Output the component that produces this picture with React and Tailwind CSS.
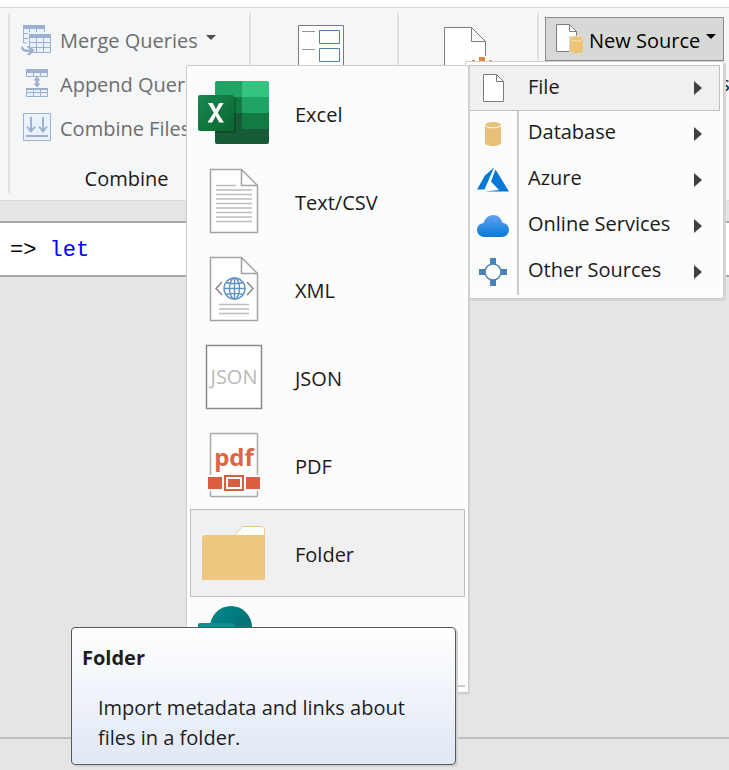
function MergeIcon() {
  return (
    <svg width="32" height="32" viewBox="0 0 32 32" fill="none" aria-hidden="true">
      <path d="M3.500 2.500h21v7h-14v9h-7z" fill="#eaf2fd" />
      <path d="M3.500 5v14h4M9.500 5v3M16.500 5v3M24.500 5v3M4 9.500h4M4 14.500h4" stroke="#9db0cf" />
      <path d="M3 1h22v4H3z" fill="#9db0cf" />
      <path d="M9.500 11h21v17.500h-21z" fill="#eaf2fd" stroke="#9db0cf" />
      <path d="M9 10h22v4H9z" fill="#9db0cf" />
      <path d="M16.500 14v14M23.500 14v14M10 18.500h20M10 23.500h20" stroke="#9db0cf" />
      <path d="M0 21h8l6 5-3 5H0z" fill="#f4f6f8" />
      <path d="M1 22.500c2.500-.5 2 2.500 5.500 3h3l-3-3.500h3.500l4.500 4.500-4.500 4.500H6.500l3-3C4 28.500 1 27 1 22.500z" fill="#9db0cf" />
    </svg>
  );
}

function AppendIcon() {
  return (
    <svg width="32" height="32" viewBox="0 0 32 32" fill="none" aria-hidden="true">
      <path d="M6.500 2.500h21v6h-21zM6.500 20.500h21v8h-21z" fill="#eaf2fd" stroke="#9db0cf" />
      <path d="M6 1h22v4H6zM6 20h22v2H6z" fill="#9db0cf" />
      <path d="M13.500 5v4M20.500 5v4M13.500 20v9M20.500 20v9M6 24.500h22" stroke="#9db0cf" />
      <path d="M17 8.500l3.500 4h-2v2h-3v-2h-2zM17 19.500l3.500-4h-2v-1h-3v1h-2z" fill="#9db0cf" />
    </svg>
  );
}

function CombineIcon() {
  return (
    <svg width="32" height="32" viewBox="0 0 32 32" fill="none" aria-hidden="true">
      <path d="M3.500 1.500h27v27h-27z" fill="#eaf2fd" stroke="#9db0cf" />
      <path d="M11 5v15M23 5v15M7 14.500l4 5 4-5M19 14.500l4 5 4-5" stroke="#9db0cf" strokeWidth="2" />
      <path d="M6 24h22" stroke="#9db0cf" strokeWidth="2" />
    </svg>
  );
}

function ParametersIcon() {
  return (
    <svg width="46" height="56" viewBox="0 0 46 56" fill="none" aria-hidden="true">
      <path d="M.5.5h45v54H.5z" fill="#fff" stroke="#7b7b7b" />
      <path d="M4 6.500h13M4 24.500h13M4 42.500h13" stroke="#979797" />
      <path d="M21.500 5.500h20v13h-20zM21.500 23.500h20v13h-20zM21.500 41.500h20v10h-20z" fill="#fff" stroke="#4b81b9" />
    </svg>
  );
}

function SettingsPageIcon() {
  return (
    <svg width="48" height="56" viewBox="0 0 48 56" fill="none" aria-hidden="true">
      <path d="M.5.5h27l14 14v40H.5z" fill="#fff" stroke="#7b7b7b" />
      <path d="M27.500.5v14h14" stroke="#7b7b7b" />
      <path d="M34 29h8v3h6v8H26v-8h8z" fill="#fff" />
      <path d="M35 30h6v4h-6zM28 33h3v2h-3zM45 33h3v2h-3z" fill="#e3853d" />
    </svg>
  );
}

function NewSourceIcon() {
  return (
    <svg width="28" height="30" viewBox="0 0 28 30" fill="none" aria-hidden="true">
      <path d="M.5.500h13l7 7v20H.5z" fill="#fff" stroke="#7b7b7b" />
      <path d="M13.500.5v7h7" stroke="#7b7b7b" />
      <path d="M13 12h15v18H13z" fill="#d7d9d7" />
      <path d="M14 14.500v12.500c0 3 13 3 13 0V14.500z" fill="#ecc478" />
      <ellipse cx="20.500" cy="14.500" rx="6.500" ry="2.500" fill="#ecc478" stroke="#f6e4c0" />
    </svg>
  );
}

function FileIcon() {
  return (
    <svg width="32" height="32" viewBox="0 0 32 32" fill="none" aria-hidden="true">
      <path d="M6.500 2.500h13l7 7v20h-20z" fill="#fff" stroke="#7b7b7b" />
      <path d="M19.500 2.500v7h7" stroke="#7b7b7b" />
    </svg>
  );
}

function DatabaseIcon() {
  return (
    <svg width="32" height="32" viewBox="0 0 32 32" aria-hidden="true">
      <path d="M8 7v18c0 4 16 4 16 0V7z" fill="#e8c07a" />
      <ellipse cx="16" cy="7" rx="8" ry="3" fill="#e8c07a" />
      <path d="M8 7c1 3.700 15 3.700 16 0" fill="none" stroke="#fff" />
    </svg>
  );
}

function AzureIcon() {
  return (
    <svg width="32" height="32" viewBox="0 0 32 32" fill="#0078d7" aria-hidden="true">
      <path d="M17 3.500L8 11.500 0 25.500h7.500z" />
      <path d="M18.500 5.500L14 17.500l8 8.500-14 1.500h24z" />
    </svg>
  );
}

function CloudIcon() {
  return (
    <svg width="32" height="32" viewBox="0 0 32 32" aria-hidden="true">
      <defs>
        <linearGradient id="cloud" x1="0" y1="0" x2="0" y2="1">
          <stop offset="0" stopColor="#62a3f2" />
          <stop offset="1" stopColor="#0878d6" />
        </linearGradient>
      </defs>
      <path d="M7.500 27A7.300 7.300 0 0 1 0 20c0-3.600 2.800-6.600 6.700-6.900C7.800 8.300 11.800 5 16.300 5c4.700 0 8.100 3.200 9.100 7.800 3.900.4 6.600 3.300 6.600 7 0 4.100-3.300 7.200-7.500 7.200z" fill="url(#cloud)" />
    </svg>
  );
}

function OtherIcon() {
  return (
    <svg width="32" height="32" viewBox="0 0 32 32" aria-hidden="true">
      <path d="M13 2h6v7h-6zM13 23h6v7h-6zM2 13h7v6H2zM23 13h7v6h-7z" fill="#4b81b9" />
      <circle cx="16" cy="16" r="8" fill="#fff" stroke="#4b81b9" strokeWidth="1.500" />
    </svg>
  );
}

function ExcelIcon() {
  return (
    <svg width="72" height="72" viewBox="0 0 72 72" aria-hidden="true">
      <defs>
        <linearGradient id="excelTile" x1="0" y1="0" x2="1" y2="1">
          <stop offset="0" stopColor="#18884f" />
          <stop offset="1" stopColor="#0b6631" />
        </linearGradient>
        <clipPath id="excelBook">
          <rect x="17" y="4" width="54" height="63" rx="2" />
        </clipPath>
      </defs>
      <g clipPath="url(#excelBook)">
        <path d="M17 4h27v16H17z" fill="#21a366" />
        <path d="M44 4h27v16H44z" fill="#33c481" />
        <path d="M17 20h27v16H17z" fill="#107c41" />
        <path d="M44 20h27v16H44z" fill="#21a366" />
        <path d="M17 36h54v31H17z" fill="#185c37" />
        <path d="M44 36h27v16H44z" fill="#107c41" />
        <rect x="6" y="20" width="32" height="36" rx="2" fill="#000" opacity=".2" />
      </g>
      <rect x="0" y="18" width="36" height="36" rx="2" fill="url(#excelTile)" />
      <path d="M9.500 45.500l6.300-9.700L10 26h4.700l3.200 6.200L21.200 26h4.400l-5.900 9.700 6.200 9.800h-4.700l-3.500-6.500-3.600 6.500z" fill="#fff" />
    </svg>
  );
}

function PageShape() {
  return (
    <>
      <path d="M12.500 4.500h31l16 16v47h-47z" fill="#fff" stroke="#a3a3a3" strokeWidth="1.500" />
      <path d="M43.500 4.500v16h16" fill="none" stroke="#a3a3a3" strokeWidth="1.500" />
    </>
  );
}

function TextIcon() {
  return (
    <svg width="72" height="72" viewBox="0 0 72 72" aria-hidden="true">
      <PageShape />
      <path d="M18 20.500h20M18 25h36M18 29.500h36M18 34h36M18 38.500h36M18 43h36M18 47.500h36M18 52h36M18 56.500h36" stroke="#bcbcbc" strokeWidth="1.300" />
    </svg>
  );
}

function XmlIcon() {
  return (
    <svg width="72" height="72" viewBox="0 0 72 72" fill="none" aria-hidden="true">
      <PageShape />
      <g stroke="#5e93c8" strokeWidth="1.400">
        <circle cx="36.500" cy="35.500" r="10.500" />
        <ellipse cx="36.500" cy="35.500" rx="5" ry="10.500" />
        <path d="M36.500 25v21M26 35.500h21M28.500 29.500c4 1.500 12 1.500 16 0M28.500 41.500c4-1.500 12-1.500 16 0" />
      </g>
      <path d="M24 29l-6 6.500 6 6.500M49 29l6 6.500-6 6.500" stroke="#8a8a8a" strokeWidth="1.500" />
      <path d="M21 51.500h30M21 56h30M21 60.500h30" stroke="#bcbcbc" strokeWidth="1.300" />
    </svg>
  );
}

function JsonIcon() {
  return (
    <svg width="72" height="72" viewBox="0 0 72 72" aria-hidden="true">
      <path d="M8.500 4.500h55v63h-55z" fill="#fff" stroke="#8a8a8a" strokeWidth="1.500" />
      <text x="36" y="43" textAnchor="middle" fontSize="20" fill="#b9b9b9" className="font-['Open_Sans','Noto_Sans',sans-serif]">
        JSON
      </text>
    </svg>
  );
}

function PdfIcon() {
  return (
    <svg width="72" height="72" viewBox="0 0 72 72" aria-hidden="true">
      <rect x="12.500" y="4.500" width="47" height="63" rx="1" fill="#fff" stroke="#a8a8a8" strokeWidth="1.500" />
      <text x="36" y="37" textAnchor="middle" fontSize="24" fontWeight="700" fill="#dc6547" className="font-['Open_Sans','Noto_Sans',sans-serif]">
        pdf
      </text>
      <path d="M9 46h54v16H9z" fill="#fff" />
      <path d="M10 48h14v12H10zM48 48h14v12H48z" fill="#d95f40" />
      <path d="M27 47h18v14H27z" fill="#fff" stroke="#d95f40" strokeWidth="2" />
      <path d="M30 50h12v8H30z" fill="#d95f40" />
    </svg>
  );
}

function FolderIcon() {
  return (
    <svg width="72" height="72" viewBox="0 0 72 72" aria-hidden="true">
      <path d="M35.500 19l9-9.500h19q3 0 3 3V20z" fill="#fff" stroke="#edc77f" />
      <path d="M4 63V22q0-4 4-4h59v45z" fill="#edc77f" />
    </svg>
  );
}

function SharePointIcon() {
  return (
    <svg width="72" height="72" viewBox="0 0 72 72" aria-hidden="true">
      <defs>
        <linearGradient id="siteDisc" x1="0" y1="0" x2="1" y2="1">
          <stop offset="0" stopColor="#03888b" />
          <stop offset="1" stopColor="#03686b" />
        </linearGradient>
      </defs>
      <circle cx="33" cy="22" r="21" fill="url(#siteDisc)" />
      <circle cx="54" cy="42" r="17" fill="#1a9ba1" />
      <circle cx="36" cy="54" r="14" fill="#37c6d0" />
      <rect x="0" y="18" width="36" height="36" rx="2" fill="#058f92" />
    </svg>
  );
}

function DownArrow({ className }) {
  return (
    <svg width="10" height="5" viewBox="0 0 10 5" className={className} fill="currentColor" aria-hidden="true">
      <path d="M0 0h10L5 5z" />
    </svg>
  );
}

const queryCommands = [
  { label: "Merge Queries", Icon: MergeIcon, arrow: true },
  { label: "Append Queries", Icon: AppendIcon, arrow: true },
  { label: "Combine Files", Icon: CombineIcon, arrow: false },
];

const sources = [
  { label: "File", Icon: FileIcon },
  { label: "Database", Icon: DatabaseIcon },
  { label: "Azure", Icon: AzureIcon },
  { label: "Online Services", Icon: CloudIcon },
  { label: "Other Sources", Icon: OtherIcon },
];

const fileTypes = [
  { label: "Excel", Icon: ExcelIcon },
  { label: "Text/CSV", Icon: TextIcon },
  { label: "XML", Icon: XmlIcon },
  { label: "JSON", Icon: JsonIcon },
  { label: "PDF", Icon: PdfIcon },
  { label: "Folder", Icon: FolderIcon },
];

function Divider() {
  return <div className="w-0.5 shrink-0 self-stretch bg-[#e0e1e3]" />;
}

function FolderTooltip() {
  return (
    <div
      role="tooltip"
      className="absolute top-[118px] -left-[119px] w-[385px] rounded-sm border border-[#5a5a5c] bg-linear-to-b from-white to-[#e0e8f5] px-2.5 pt-4 pb-[11px] text-[#1e1e1e] shadow-[2px_2px_0_#d2d2d3]"
    >
      <h2 className="leading-[28px] font-bold">Folder</h2>
      <p className="mt-[21px] pl-4 leading-[30px]">Import metadata and links about files in a folder.</p>
    </div>
  );
}

function FileMenu() {
  return (
    <div className="absolute top-[3px] right-[254px] w-[283px] rounded-xs border border-[#cccccc] bg-white p-[3px] pb-[5px] shadow-[1px_2px_0_#d5d5d5]">
      <ul className="border-b-2 border-[#cccccc] bg-[#fcfcfc]">
        {fileTypes.map(({ label, Icon }) => (
          <li key={label} className="relative">
            <button
              type="button"
              className={
                "flex h-[88px] w-full items-center gap-[25px] border pl-[7px] text-left " +
                (label === "Folder" ? "border-[#bfbfbf] bg-[#f0f0f0]" : "border-transparent")
              }
            >
              <Icon />
              <span className="pt-1">{label}</span>
            </button>
            {label === "Folder" && <FolderTooltip />}
          </li>
        ))}
        <li>
          <button type="button" aria-label="SharePoint folder" className="flex h-[88px] w-full items-center pl-2">
            <SharePointIcon />
          </button>
        </li>
      </ul>
    </div>
  );
}

function SourceMenu() {
  return (
    <div className="absolute top-full right-0 z-10 w-[259px] rounded-xs border border-[#cfcfcf] bg-white p-[3px] text-[#1a1a1a] shadow-[2px_2px_0_#d5d5d5]">
      <ul className="bg-[#fcfcfc]">
        {sources.map(({ label, Icon }) => (
          <li key={label}>
            <button
              type="button"
              className={
                "flex h-[46px] w-full items-stretch border text-left " +
                (label === "File" ? "border-[#bfbfbf] bg-[#f0f0f0]" : "border-y-0 border-transparent")
              }
            >
              <span
                className={
                  "flex w-[49px] items-center justify-center border-r-2 pr-0.5 " +
                  (label === "File" ? "border-transparent" : "border-[#cccccc]")
                }
              >
                <Icon />
              </span>
              <span className="flex-1 pt-1.5 pl-[9px] leading-[30px]">{label}</span>
              <svg width="8" height="14" viewBox="0 0 8 14" className="mr-[17px] self-center" fill="#404040" aria-hidden="true">
                <path d="M0 0l8 7-8 7z" />
              </svg>
            </button>
          </li>
        ))}
      </ul>
      <FileMenu />
    </div>
  );
}

export default function App() {
  return (
    <div className="flex min-h-screen flex-col overflow-hidden bg-[#e5e5e5] font-['Open_Sans','Noto_Sans',sans-serif] text-[20px] text-[#1a1a1a]">
      <header className="relative z-10 border-b border-[#d6d8da] bg-[#f4f6f8]">
        <div className="h-2 border-b border-[#d6d8da] bg-white" />
        <div className="flex h-48 items-start pt-[5px] pb-[7px] pl-2">
          <Divider />
          <section className="flex h-full w-[239px] shrink-0 flex-col pt-[5px] text-[#6e6e6e]">
            {queryCommands.map(({ label, Icon, arrow }) => (
              <button key={label} type="button" className="flex h-11 shrink-0 items-center pl-2.5 whitespace-nowrap">
                <Icon />
                <span className="ml-2 pt-0.5">{label}</span>
                {arrow && <DownArrow className="mb-1.5 ml-2 shrink-0 text-[#4f4f4f]" />}
              </button>
            ))}
            <h2 className="mt-3.5 shrink-0 pr-1.5 text-center leading-[30px] text-[#1a1a1a]">Combine</h2>
          </section>
          <Divider />
          <section className="flex w-[146px] shrink-0 justify-center pt-3 pr-1.5">
            <button type="button" aria-label="Manage Parameters">
              <ParametersIcon />
            </button>
          </section>
          <Divider />
          <section className="flex w-[138px] shrink-0 justify-center pt-3.5">
            <button type="button" aria-label="Data source settings">
              <SettingsPageIcon />
            </button>
          </section>
          <Divider />
          <section className="flex shrink-0 flex-col items-start pt-1 pl-1.5">
            <div className="relative">
              <button
                type="button"
                className="flex h-11 w-[179px] items-center border border-[#8a8c8a] bg-[#d7d9d7] pl-2.5 whitespace-nowrap text-black"
              >
                <NewSourceIcon />
                <span className="ml-[5px] pt-1">New Source</span>
                <DownArrow className="mb-1.5 ml-1.5 shrink-0" />
              </button>
              <SourceMenu />
            </div>
            <button type="button" className="flex h-11 items-center pt-0.5 pl-[42px] whitespace-nowrap">
              Recent Sources
            </button>
          </section>
        </div>
      </header>
      <main className="flex-1 pt-5">
        <pre className="border-y-2 border-[#a8a8a8] bg-white pt-3.5 pb-2.5 pl-2.5 font-['Liberation_Mono',monospace] text-[22px] leading-[28px] text-black">
          {"=> "}
          <span className="text-[#0000ff]">let</span>
        </pre>
      </main>
      <footer className="h-[33px] border-t-2 border-[#bfbfbf]" />
    </div>
  );
}
